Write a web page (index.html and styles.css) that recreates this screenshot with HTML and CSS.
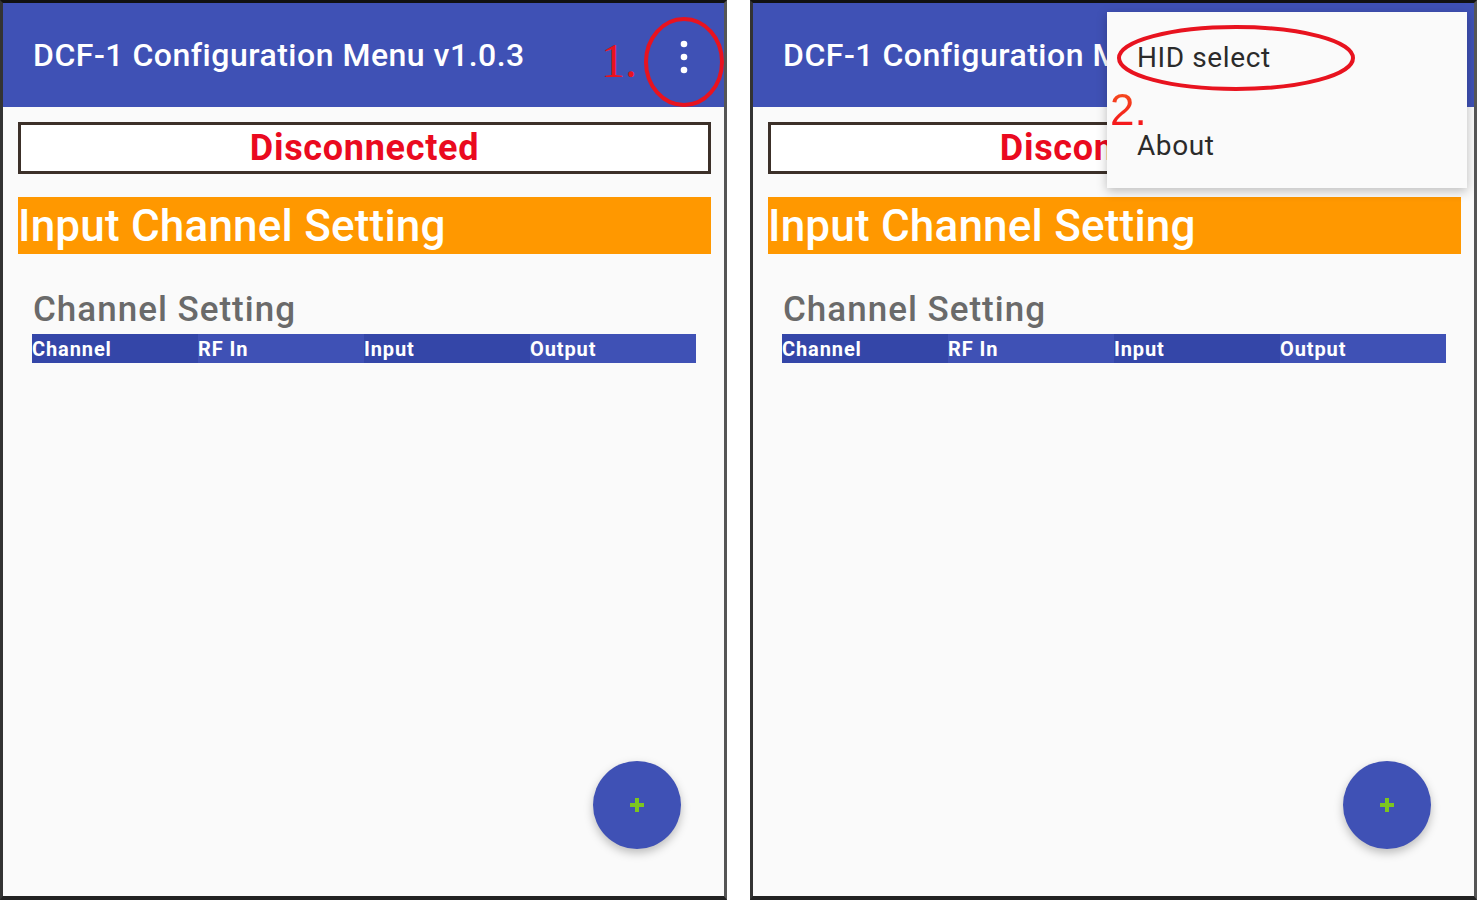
FILE: index.html
```html
<!DOCTYPE html>
<html lang="en">
    <head>
        <meta charset="UTF-8">
        <meta name="viewport" content="width=device-width, initial-scale=1.0">
        <link rel="stylesheet" href="styles.css">
        <title>DCF-1 Configuration Menu</title>
    </head>

    <body>
    <div class="screens">

        <!-- step 1: overflow button -->
        <div class="phone">
            <div class="app-bar">
                <h1 class="app-title">DCF-1 Configuration Menu v1.0.3</h1>
                <span class="step step-one">1.</span>
                <button class="overflow" aria-label="More options">
                    <svg width="8" height="34" viewBox="0 0 8 34"><circle cx="4" cy="4" r="3.3" fill="#fff"/><circle cx="4" cy="17" r="3.3" fill="#fff"/><circle cx="4" cy="30" r="3.3" fill="#fff"/></svg>
                </button>
                <svg class="mark mark-one" width="84" height="96" viewBox="0 0 84 96"><ellipse cx="42" cy="48" rx="38" ry="43" fill="none" stroke="#e8131f" stroke-width="4"/></svg>
            </div>

            <div class="status">Disconnected</div>
            <div class="section-bar">Input Channel Setting</div>

            <h2 class="sub-heading">Channel Setting</h2>
            <div class="table-head">
                <span>Channel</span>
                <span>RF In</span>
                <span>Input</span>
                <span>Output</span>
            </div>

            <button class="fab" aria-label="Add">
                <svg width="16" height="16" viewBox="0 0 16 16"><path d="M6 1h4v5h5v4h-5v5H6v-5H1V6h5z" fill="#7cc520"/></svg>
            </button>
        </div>

        <!-- step 2: menu open -->
        <div class="phone">
            <div class="app-bar">
                <h1 class="app-title">DCF-1 Configuration Menu v1.0.3</h1>
            </div>

            <div class="status">Disconnected</div>
            <div class="section-bar">Input Channel Setting</div>

            <h2 class="sub-heading">Channel Setting</h2>
            <div class="table-head">
                <span>Channel</span>
                <span>RF In</span>
                <span>Input</span>
                <span>Output</span>
            </div>

            <button class="fab" aria-label="Add">
                <svg width="16" height="16" viewBox="0 0 16 16"><path d="M6 1h4v5h5v4h-5v5H6v-5H1V6h5z" fill="#7cc520"/></svg>
            </button>

            <ul class="menu">
                <li>HID select</li>
                <li>About</li>
            </ul>
            <span class="step step-two">2.</span>
            <svg class="mark mark-two" width="244" height="72" viewBox="0 0 244 72"><ellipse cx="122" cy="36" rx="117" ry="31" fill="none" stroke="#e8131f" stroke-width="4"/></svg>
        </div>

    </div>
    </body>
</html>
```

FILE: styles.css
```css
* { box-sizing: border-box; }

html, body { margin: 0; padding: 0; }

body {
    background: #fff;
    font-family: "Roboto", "Liberation Sans", sans-serif;
}

.screens {
    display: flex; gap: 23px;
    width: 1477px; height: 900px;
}

.phone {
    position: relative; overflow: hidden;
    width: 727px; height: 900px;
    background: #fafafa;
    border-top: 3px solid #111;
    border-bottom: 4px solid #222;
    border-left: 3px solid #333;
    border-right: 3px solid #555;
}

.app-bar {
    position: relative;
    display: flex; align-items: center;
    height: 104px; padding-left: 30px;
    background: #3f51b5;
}

.app-title {
    margin: 0; color: #fff;
    font-size: 32px; font-weight: 500; letter-spacing: 0.5px;
}

.overflow {
    position: absolute; left: 673px; top: 36px;
    border: none; padding: 0; background: none;
    width: 16px; height: 36px;
    display: flex; align-items: center; justify-content: center;
}

.step {
    position: absolute; color: #e8131f; line-height: 1;
}

.step-one {
    left: 598px; top: 34px;
    font-family: "Liberation Serif", serif; font-size: 48px;
}

.step-two {
    left: 357px; top: 90px;
    font-family: "Liberation Sans", sans-serif; font-size: 44px; line-height: 34px;
    background: linear-gradient(#f54a1e, #f4141c);
    -webkit-background-clip: text; color: transparent;
}

.mark { position: absolute; }
.mark-one { left: 639px; top: 11px; }
.mark-two { left: 361px; top: 19px; }

.status {
    margin: 15px 13px 0 15px; height: 52px;
    border: 3px solid #3c3029; background: #fff;
    display: flex; align-items: center; justify-content: center;
    color: #ea0a1f; font-size: 36px; font-weight: 700; letter-spacing: 0.7px;
}

.section-bar {
    margin: 23px 13px 0 15px; height: 57px;
    display: flex; align-items: center;
    background: #ff9800; color: #fff;
    font-size: 44px; font-weight: 500; letter-spacing: 0.2px;
}

.sub-heading {
    margin: 36px 0 0 30px;
    color: #6a6a6a; font-size: 35px; font-weight: 500; letter-spacing: 1px;
    line-height: 40px;
}

.table-head {
    display: grid; grid-template-columns: repeat(4, 1fr);
    margin: 4px 28px 0 29px; height: 29px;
}

.table-head span {
    display: flex; align-items: center;
    color: #fff; font-size: 20px; font-weight: 700; letter-spacing: 0.9px;
    background: #3f51b5;
}

.table-head span:nth-child(odd) { background: #3446a8; }

.fab {
    position: absolute; right: 43px; bottom: 47px;
    width: 88px; height: 88px; border: none; border-radius: 50%;
    background: #3f51b5;
    box-shadow: 0 4px 10px rgba(0, 0, 0, 0.25);
    display: flex; align-items: center; justify-content: center;
}

.menu {
    position: absolute; left: 354px; top: 9px;
    width: 360px; height: 176px;
    margin: 0; padding: 30px 0 0 30px; list-style: none;
    background: #fafafa;
    box-shadow: 0 3px 10px rgba(0, 0, 0, 0.25);
}

.menu li {
    height: 88px; line-height: 32px; color: #2b2b2b;
    font-size: 28px; letter-spacing: 0.6px;
}
```
